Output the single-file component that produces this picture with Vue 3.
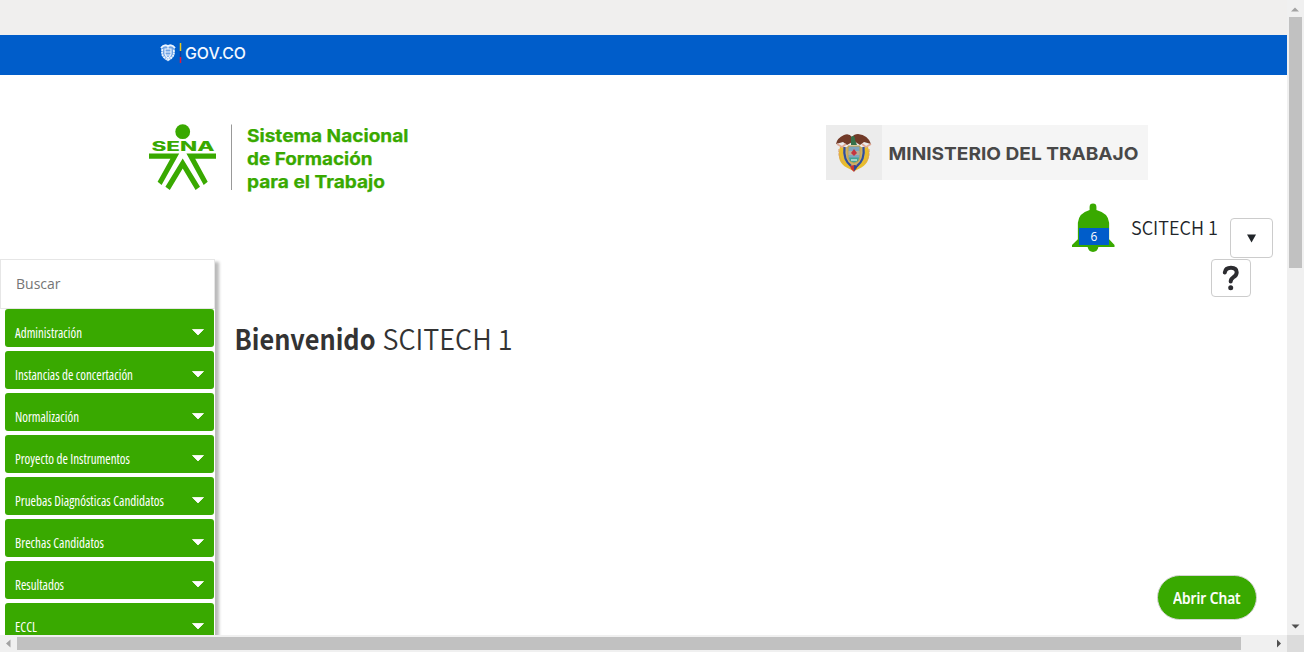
<script setup>
const menu = [
  { label: 'Administración', width: 67 },
  { label: 'Instancias de concertación', width: 118 },
  { label: 'Normalización', width: 64 },
  { label: 'Proyecto de Instrumentos', width: 115 },
  { label: 'Pruebas Diagnósticas Candidatos', width: 149 },
  { label: 'Brechas Candidatos', width: 89 },
  { label: 'Resultados', width: 49 },
  { label: 'ECCL', width: 22 },
]
</script>

<template>
  <div class="window">
    <div class="page">
      <div class="gap"></div>
      <div class="gov">
        <svg width="90" height="24" viewBox="0 0 90 24">
          <path d="M1 5Q4 1 8 3Q12 1 15 5L14 14Q12 18 8 19.5Q4 18 2 14Z" fill="#6fa3e4" />
          <g fill="none" stroke="#eef6ff" stroke-width="1.1">
            <path d="M1 6Q4 2 8 4Q12 2 15 6" stroke-width="1.8" />
            <path d="M2.5 7Q1 13 4.5 15.5Q8 19 11.5 15.5Q15 13 13.500 7" stroke-dasharray="2 .6" stroke-width="1.8" />
            <path d="M5 7H11V12Q10 15 8 16Q6 15 5 12ZM5 10H11M5 13H11M8 3V7M8 17V19" />
          </g>
          <path d="M20.500 1V9" stroke="#e9c91c" stroke-width="1.5" />
          <path d="M20.500 9V15" stroke="#123f9b" stroke-width="1.5" />
          <path d="M20.500 15V21" stroke="#df183f" stroke-width="1.5" />
          <text x="25" y="17" class="gov-text" textLength="61" lengthAdjust="spacingAndGlyphs">GOV.CO</text>
        </svg>
      </div>

      <header>
        <div class="brands">
          <svg class="sena" width="264" height="76" viewBox="0 0 264 76">
            <g fill="#39a900">
              <circle cx="34.700" cy="11.700" r="7.400" />
              <text x="3.500" y="30.700" class="sena-word" textLength="63" lengthAdjust="spacingAndGlyphs">SENA</text>
              <path d="M1 33.400H31.200L13.600 64.900L9.600 61.800L22.400 38.700H1Z" />
              <path d="M38.400 33.400H68V38.700H47.200L59.700 61.800L55.700 64.900Z" />
              <path d="M34.700 38.600L52 66.800L47.600 70L34.700 48.400L21.800 70L17.400 66.800Z" />
            </g>
            <path d="M83.500 4.500V70" stroke="#999" />
            <g class="slogan">
              <text x="99" y="22" textLength="161.500" lengthAdjust="spacingAndGlyphs">Sistema Nacional</text>
              <text x="99" y="44.500" textLength="125.500" lengthAdjust="spacingAndGlyphs">de Formación</text>
              <text x="99" y="67.500" textLength="138" lengthAdjust="spacingAndGlyphs">para el Trabajo</text>
            </g>
          </svg>
          <div class="ministry">
            <div class="arms">
              <svg width="40" height="42" viewBox="0 0 40 42">
                <path d="M8 15Q6 29 15 35L20 37L26 35Q34 28 32 15Z" fill="#cbb06a" />
                <path d="M8 15Q4 29 14 34L20 37L26 34Q36 28 32 15" fill="none" stroke="#e8bd2c" stroke-width="4" />
                <path d="M10.500 15Q9 28 17 34M29.500 15Q31 28 23 34" fill="none" stroke="#2e4e9e" stroke-width="2.200" />
                <path d="M5 17Q4 27 10 31M35 17Q36 27 30 31" fill="none" stroke="#dc9a6c" stroke-width="1" stroke-dasharray="3 1" />
                <path d="M2 12Q3 6 10 3Q15 1 18 5Q20 2 24 2Q34 3 37 12L30 10L26 13L20 9L13 13L9 10Z" fill="#713a28" />
                <path d="M3 12L8 15L12 12M28 12L32 15L37 12" fill="none" stroke="#e0aa96" stroke-width="1.800" />
                <path d="M17 5Q21 2 21 8L23 13H17Z" fill="#35704a" />
                <path d="M14 14H26V26Q25 30 20 31Q15 30 14 26Z" fill="#7fa5c0" stroke="#c9a040" />
                <path d="M14.500 19H25.500V23H14.500Z" fill="#b8ac9a" />
                <path d="M15 25.500H25L24 29L20 30.500L16 29Z" fill="#42a392" />
                <path d="M20 17L23 21L20 24L17 21Z" fill="#c53440" />
                <path d="M17 28H23" stroke="#fff" />
                <path d="M16 34L20 33L24 34L22 37L20 40L17 37Z" fill="#c83935" />
                <path d="M20 33V39L22 37L24 34Z" fill="#294b99" />
              </svg>
            </div>
            <svg width="266" height="55" viewBox="0 0 266 55">
              <text x="6.500" y="35" class="ministry-text" textLength="250" lengthAdjust="spacingAndGlyphs">MINISTERIO DEL TRABAJO</text>
            </svg>
          </div>
        </div>
        <div class="user">
          <div class="bell">
            <svg width="43" height="50" viewBox="0 0 44 51">
              <path d="M18 7V4Q18 .5 21.500 .5Q25 .5 25 4V7Q37 10 38 20V37L43.500 43V45H27Q26 50 21.500 50Q17 50 16 45H0V43L6 37V20Q7 10 18 7Z" fill="#39a900" />
            </svg>
            <span class="badge">6</span>
          </div>
          <svg class="name" width="90" height="30" viewBox="0 0 90 30">
            <text x="0" y="22" textLength="87" lengthAdjust="spacingAndGlyphs">SCITECH 1</text>
          </svg>
          <button class="drop"><svg width="9" height="9" viewBox="0 0 9 9"><path d="M0 .5H9L4.500 8.500Z" fill="#212529" /></svg></button>
        </div>
      </header>

      <div class="content">
        <nav>
          <input type="text" placeholder="Buscar" />
          <ul>
            <li v-for="item in menu" :key="item.label">
              <svg class="label" width="165" height="24" viewBox="0 0 165 24">
                <text x="0" y="17" :textLength="item.width" lengthAdjust="spacingAndGlyphs">{{ item.label }}</text>
              </svg>
              <svg class="caret" width="12" height="7" viewBox="0 0 12 7"><path d="M.5 .5H11.500L6 6Z" fill="#fff" stroke="#fff" stroke-width=".8" stroke-linejoin="round" /></svg>
            </li>
          </ul>
        </nav>
        <main>
          <button class="help">
            <svg width="18" height="26" viewBox="0 0 18 26">
              <path d="M2.800 7.500Q3.500 2.800 9 2.800Q14.700 2.800 14.700 7.300Q14.700 10.500 11.300 12.300Q8.700 14 8.700 16.500" fill="none" stroke="#2c2c30" stroke-width="4" stroke-linecap="round" />
              <circle cx="8.700" cy="22.700" r="2.500" fill="#2c2c30" />
            </svg>
          </button>
          <h1>
            <svg width="290" height="48" viewBox="0 0 290 48">
              <text x="-.5" y="35" class="strong" textLength="141" lengthAdjust="spacingAndGlyphs">Bienvenido</text>
              <text x="147.500" y="35" textLength="130" lengthAdjust="spacingAndGlyphs">SCITECH 1</text>
            </svg>
          </h1>
        </main>
      </div>
      <button class="chat">
        <svg width="68" height="24" viewBox="0 0 68 24"><text x="0" y="17.500" textLength="67.500" lengthAdjust="spacingAndGlyphs">Abrir Chat</text></svg>
      </button>
    </div>
    <div class="vbar">
      <svg width="17" height="17"><path d="M4 11.500H12L8 7.500Z" fill="#a3a3a3" /></svg>
      <div class="vthumb"></div>
      <svg width="17" height="17"><path d="M4.500 6.500H12.500L8.500 10.500Z" fill="#505050" /></svg>
    </div>
    <div class="hbar">
      <svg width="17" height="17"><path d="M10.500 4.500V12.500L6 8.500Z" fill="#a3a3a3" /></svg>
      <div class="hthumb"></div>
      <svg width="17" height="17"><path d="M7 4.500V12.500L11 8.500Z" fill="#505050" /></svg>
    </div>
    <div class="corner"></div>
  </div>
</template>

<style>
body { margin: 0; background: #fff; overflow: hidden; }
</style>
<style scoped>
* { box-sizing: border-box; }
svg { display: block; flex: none; }
button { padding: 0; display: flex; align-items: center; justify-content: center; }
.window { width: 1304px; height: 652px; display: grid; grid-template: 635px 17px / 1287px 17px; font-family: "Open Sans", sans-serif; }
.page { position: relative; overflow: hidden; background: #fff; }
.gap { height: 35px; background: #f0efee; }
.gov { height: 40px; background: #005dca; padding: 7px 0 0 160px; }
.gov-text { font: 500 16px Inter, sans-serif; fill: #f4f8ff; }
header { height: 184px; }
.brands { display: flex; height: 128px; padding: 45px 139px 0 148px; justify-content: space-between; }
.sena-word { font: 800 12.5px Inter, sans-serif; }
.slogan { font: 700 17.5px Inter, sans-serif; fill: #39a900; stroke: #39a900; stroke-width: .25px; }
.ministry { display: flex; width: 322px; height: 55px; margin-top: 5px; background: #f5f5f5; }
.arms { width: 56px; height: 55px; background: #ececec; display: flex; align-items: center; justify-content: center; }
.ministry-text { font: 700 18px Inter, sans-serif; fill: #484848; }
.user { display: flex; justify-content: flex-end; padding-right: 14px; height: 56px; }
.bell { position: relative; width: 44px; height: 51px; margin-right: 15px; }
.badge { position: absolute; left: 7px; top: 25px; width: 30px; height: 17px; background: #005dca; color: #fff; font: 12px/18px "Open Sans", sans-serif; text-align: center; }
.name { margin: 10px 9px 0 0; font: 350 19px "Noto Sans CJK SC", sans-serif; fill: #212529; }
.drop { width: 43px; height: 40px; margin-top: 15px; background: #fff; border: 1px solid #ccc; border-radius: 4px; }
.content { display: flex; height: 376px; }
nav { width: 215px; height: 420px; background: #fff; box-shadow: 4px 3px 3px #bbb; }
input { display: block; width: 215px; height: 50px; border: 1px solid #e6e6e6; border-radius: 0; padding: 0 15px 2px; font: 14px "Open Sans", sans-serif; background: #fff; outline: 0; }
input::placeholder { color: #757575; opacity: 1; }
ul { list-style: none; margin: 0; padding: 0 1px 0 5px; display: flex; flex-direction: column; gap: 4px; }
li { height: 38px; background: #39a900; border-radius: 3px; display: flex; align-items: flex-start; justify-content: space-between; padding: 12px 10px 0; font-size: 14px; font-stretch: 75%; fill: #fff; }
.label { overflow: visible; }
.caret { margin-top: 8px; }
main { flex: 1; display: flex; flex-direction: column; padding: 0 36px 0 20px; }
.help { align-self: flex-end; width: 40px; height: 38px; border: 1px solid #ccc; border-radius: 4px; background: #fff; }
h1 { margin: 18px 0 0; font: 350 28px "Noto Sans CJK SC", sans-serif; fill: #333; }
.strong { font-weight: 700; }
.chat { position: absolute; right: 30px; bottom: 15px; width: 100px; height: 45px; border: 1px solid #d5d5d5; border-radius: 23px; background: #39a900; }
.chat text { font: 600 15.500px "Open Sans", sans-serif; fill: #fff; stroke: #fff; stroke-width: .2px; }
.vbar, .hbar { background: #f0f0f0; display: flex; justify-content: space-between; }
.vbar { flex-direction: column; }
.vthumb { width: 13px; height: 251px; margin: 0 0 350px 2px; background: #c1c1c1; }
.hthumb { width: 1224px; height: 13px; margin: 2px 29px 0 0; background: #c1c1c1; }
.corner { background: #dcdcdc; }
</style>
